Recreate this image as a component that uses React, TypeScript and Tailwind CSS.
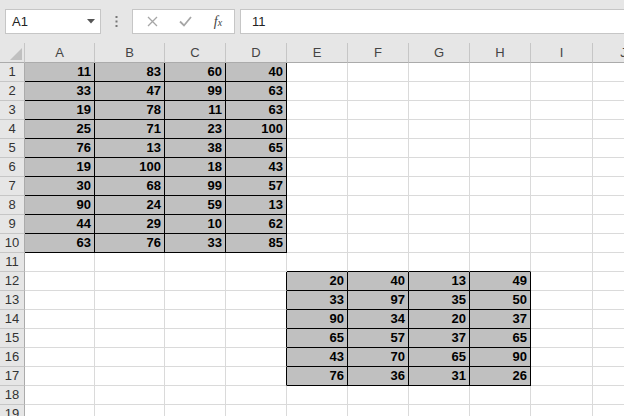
import React from "react";

// sheet data, keyed by row then column (A=1)
const table1: number[][] = [
  [11, 83, 60, 40],
  [33, 47, 99, 63],
  [19, 78, 11, 63],
  [25, 71, 23, 100],
  [76, 13, 38, 65],
  [19, 100, 18, 43],
  [30, 68, 99, 57],
  [90, 24, 59, 13],
  [44, 29, 10, 62],
  [63, 76, 33, 85],
];

const table2: number[][] = [
  [20, 40, 13, 49],
  [33, 97, 35, 50],
  [90, 34, 20, 37],
  [65, 57, 37, 65],
  [43, 70, 65, 90],
  [76, 36, 31, 26],
];

const columns = ["A", "B", "C", "D", "E", "F", "G", "H", "I", "J"];
const rows = Array.from({ length: 19 }, (_, i) => i + 1);

function valueAt(r: number, c: number): number | undefined {
  if (r >= 1 && r <= 10 && c >= 1 && c <= 4) return table1[r - 1][c - 1];
  if (r >= 12 && r <= 17 && c >= 5 && c <= 8) return table2[r - 12][c - 5];
  return undefined;
}

const filled = (r: number, c: number) => valueAt(r, c) !== undefined;

function Cell({ r, c }: { r: number; c: number }) {
  const v = valueAt(r, c);
  const blackRight = filled(r, c) || filled(r, c + 1);
  const blackBottom = filled(r, c) || filled(r + 1, c);
  return (
    <div
      className={[
        "h-[19px] border-r border-b flex items-center justify-end pr-[3px] text-[13px] font-bold text-black",
        filled(r, c) ? "bg-[#c0c0c0]" : "bg-white",
        blackRight ? "border-r-black" : "border-r-[#dadada]",
        blackBottom ? "border-b-black" : "border-b-[#dadada]",
      ].join(" ")}
    >
      {v}
    </div>
  );
}

export default function App() {
  return (
    <div className="w-[624px] h-[416px] overflow-hidden bg-white font-['Liberation_Sans',Arial,sans-serif] select-none">
      {/* formula bar */}
      <div className="h-[43px] bg-[#e6e6e6] flex items-start pt-[9px]">
        <div className="ml-[5px] w-[96px] h-[25px] bg-white border border-[#c6c6c6] flex items-center pl-[6px] pr-[5px] text-[13px] text-[#222]">
          <span className="flex-1">A1</span>
          <svg width="8" height="5" viewBox="0 0 8 5">
            <path d="M0 0h8L4 4.5z" fill="#555" />
          </svg>
        </div>
        <div className="w-[31px] h-[25px] flex items-center justify-center">
          <svg width="3" height="11" viewBox="0 0 3 11">
            <rect x="0.5" y="0" width="2" height="2" fill="#777" />
            <rect x="0.5" y="4.5" width="2" height="2" fill="#777" />
            <rect x="0.5" y="9" width="2" height="2" fill="#777" />
          </svg>
        </div>
        <div className="w-[103px] h-[25px] bg-white border border-[#c6c6c6] flex items-center">
          <div className="w-[36px] flex justify-center pl-[2px]">
            <svg width="11" height="11" viewBox="0 0 11 11">
              <path d="M1 1l9 9M10 1l-9 9" stroke="#a6a6a6" strokeWidth="1.3" />
            </svg>
          </div>
          <div className="w-[33px] flex justify-center">
            <svg width="13" height="11" viewBox="0 0 13 11">
              <path d="M1 5.5l4 4L12 1" stroke="#a6a6a6" strokeWidth="1.8" fill="none" />
            </svg>
          </div>
          <div className="w-[32px] flex justify-center">
            <span className="font-['Liberation_Serif',serif] italic text-[14px] text-[#444] leading-none">
              f<span className="text-[10px]">x</span>
            </span>
          </div>
        </div>
        <div className="ml-[5px] flex-1 h-[25px] bg-white border-y border-l border-[#c6c6c6] flex items-center pl-[11px] text-[13px] text-[#222]">
          11
        </div>
      </div>

      {/* sheet */}
      <div className="grid grid-cols-[25px_70px_70px_61px_61px_61px_61px_61px_61px_62px_62px]">
        <div className="h-[20px] bg-[#e6e6e6] border-r border-b border-r-[#c6c6c6] border-b-[#ababab] flex items-end justify-end pr-[2px] pb-[2px]">
          <svg width="12" height="12" viewBox="0 0 12 12">
            <path d="M12 0V12H0z" fill="#c0c0c0" />
          </svg>
        </div>
        {columns.map((col) => (
          <div
            key={col}
            className="h-[20px] bg-[#e6e6e6] border-r border-b border-r-[#c6c6c6] border-b-[#ababab] flex items-center justify-center text-[13px] text-[#444]"
          >
            {col}
          </div>
        ))}

        {rows.map((r) => (
          <React.Fragment key={r}>
            <div className="h-[19px] bg-[#e6e6e6] border-r border-b border-r-[#ababab] border-b-[#c6c6c6] flex items-center justify-center text-[13px] text-[#333]">
              {r}
            </div>
            {columns.map((_, i) => (
              <Cell key={i} r={r} c={i + 1} />
            ))}
          </React.Fragment>
        ))}
      </div>
    </div>
  );
}
